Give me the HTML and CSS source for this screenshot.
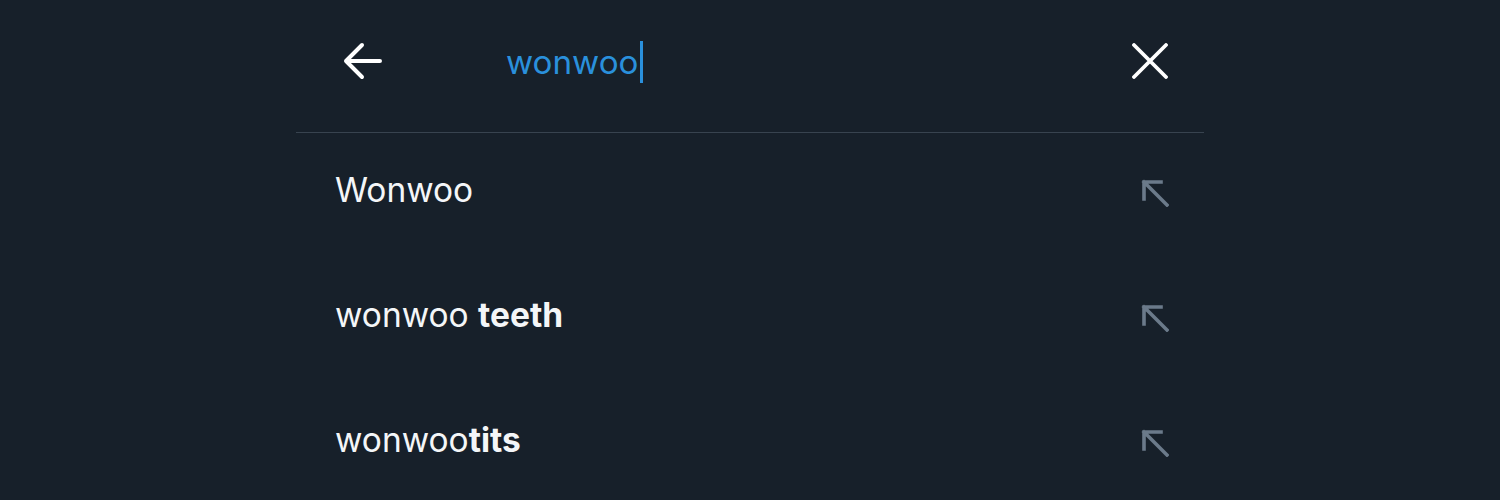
FILE: index.html
```html
<!DOCTYPE html>
<html>
<head>
<meta charset="utf-8">
<link rel="stylesheet" href="styles.css">
</head>
<body>
<div class="panel">
  <header class="bar">
    <button class="icon-btn back" aria-label="Back">
      <svg width="40" height="40" viewBox="0 0 40 40"><path d="M38 20H4M20 4L4 20l16 16" fill="none" stroke="#fff" stroke-width="4" stroke-linecap="round" stroke-linejoin="round"/></svg>
    </button>
    <div class="query"><span class="qtext">wonwoo</span><span class="caret"></span></div>
    <button class="icon-btn close" aria-label="Clear">
      <svg width="36" height="36" viewBox="0 0 36 36"><path d="M2 2L34 34M34 2L2 34" fill="none" stroke="#fff" stroke-width="3.8" stroke-linecap="round"/></svg>
    </button>
  </header>
  <ul class="list">
    <li class="item"><span class="label">Wonwoo</span><svg class="fill" width="28" height="28" viewBox="0 0 28 28"><path d="M26 26L3 3M3 3v17M3 3h17" fill="none" stroke="#6b7a8a" stroke-width="3.6" stroke-linecap="square"/></svg></li>
    <li class="item"><span class="label">wonwoo <b>teeth</b></span><svg class="fill" width="28" height="28" viewBox="0 0 28 28"><path d="M26 26L3 3M3 3v17M3 3h17" fill="none" stroke="#6b7a8a" stroke-width="3.6" stroke-linecap="square"/></svg></li>
    <li class="item"><span class="label">wonwoo<b>tits</b></span><svg class="fill" width="28" height="28" viewBox="0 0 28 28"><path d="M26 26L3 3M3 3v17M3 3h17" fill="none" stroke="#6b7a8a" stroke-width="3.6" stroke-linecap="square"/></svg></li>
  </ul>
</div>
</body>
</html>
```
FILE: styles.css
```css
html, body {
  margin: 0;
  padding: 0;
  background: #17202a;
  height: 100%;
  overflow: hidden;
}
body {
  font-family: "Inter", "Noto Sans", sans-serif;
  color: #f4f6f8;
}
.panel {
  width: 908px;
  margin: 0 auto;
}
.bar {
  height: 133px;
  border-bottom: 1px solid #38434f;
  display: flex;
  align-items: center;
  padding: 0 36px 0 46px;
  box-sizing: border-box;
}
.icon-btn {
  background: none;
  border: 0;
  padding: 0;
  display: flex;
  cursor: pointer;
}
.back { margin-top: -10px; }
.close { margin-left: auto; margin-top: -10px; }
.query {
  margin-left: 124px;
  margin-top: -8px;
  display: flex;
  align-items: center;
  font-size: 33.2px;
  color: #2a90dc;
}
.caret {
  width: 3px;
  height: 42px;
  background: #2a90dc;
  margin-left: 2px;
}
.list {
  list-style: none;
  margin: 0;
  padding: 0;
}
.item {
  height: 125px;
  display: flex;
  align-items: center;
  justify-content: space-between;
  padding: 0 35px 0 39px;
  font-size: 33.5px;
}
.item:first-child { margin-top: -6px; }
.item svg { margin-top: 6px; }
.label b { font-weight: 700; }
```
